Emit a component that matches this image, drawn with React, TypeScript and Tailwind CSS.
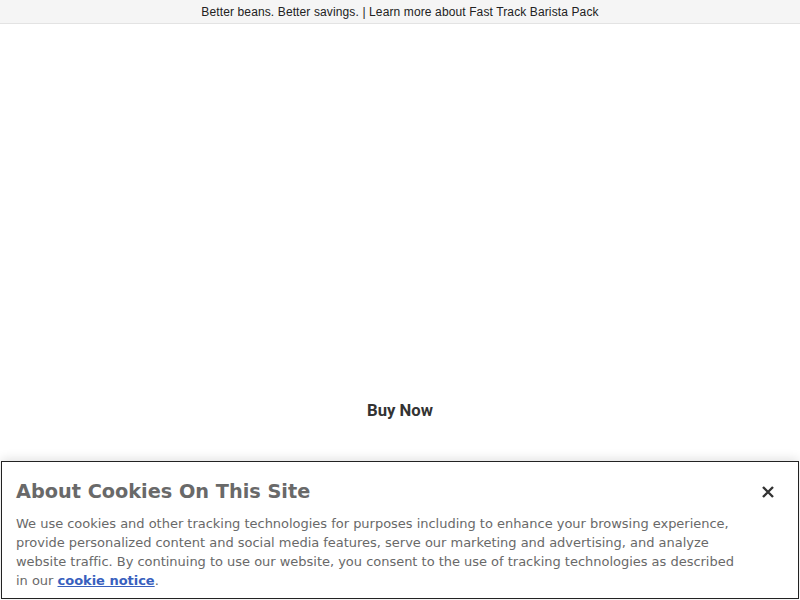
import React from "react";

export default function App() {
  return (
    <div className="relative w-[800px] h-[600px] overflow-hidden bg-white">
      <div className="h-6 bg-[#f5f5f5] border-b border-[#e3e3e3] flex items-center justify-center text-[12px] text-[#222] [font-family:'Liberation_Sans',Arial,sans-serif] tracking-[0.12px]">
        Better beans. Better savings. | Learn more about Fast Track Barista Pack
      </div>
      <div className="h-[374px]" />
      <div className="flex justify-center">
        <span className="text-[16.7px] font-bold text-[#333] [font-family:Roboto,sans-serif] leading-6 mt-[1px]">Buy Now</span>
      </div>
      <div className="absolute left-[1px] right-[1px] top-[461px] h-[138px] bg-white border border-[#222] shadow-[0_-2px_10px_rgba(0,0,0,0.12)] [font-family:'DejaVu_Sans',sans-serif] text-[#696969]">
        <div className="pl-[14px] pr-[60px] pt-[18px]">
          <h2 className="text-[19.3px] font-bold leading-6 text-[#696969]">About Cookies On This Site</h2>
          <p className="mt-[10px] text-[13px] leading-[19px] tracking-[-0.02px]">
            We use cookies and other tracking technologies for purposes including to enhance your browsing experience, provide personalized content and social media features, serve our marketing and advertising, and analyze website traffic. By continuing to use our website, you consent to the use of tracking technologies as described in our{" "}
            <a className="font-bold underline text-[#3860be]">cookie notice</a>.
          </p>
        </div>
        <div className="absolute right-[23px] top-[23px]">
          <svg width="14" height="14" viewBox="0 0 14 14">
            <path d="M2 2 L12 12 M12 2 L2 12" stroke="#333" strokeWidth="2.4" strokeLinecap="butt" />
          </svg>
        </div>
      </div>
    </div>
  );
}
